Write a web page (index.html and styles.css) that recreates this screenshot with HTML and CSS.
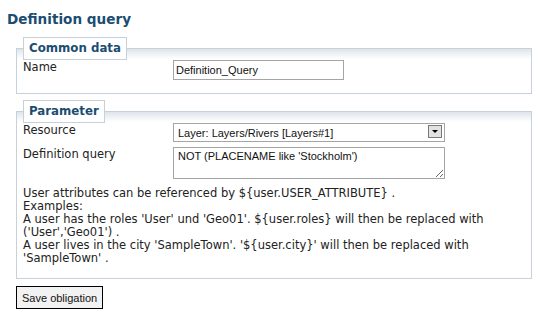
FILE: index.html
```html
<!DOCTYPE html>
<html lang="en">
<head>
    <meta charset="UTF-8">
    <title>Definition query</title>
    <link rel="stylesheet" href="styles.css">
</head>
<body>
    <h1>Definition query</h1>
    <form>
        <fieldset>
            <legend>Common data</legend>
            <div class="row">
                <label for="name">Name</label>
                <input type="text" id="name" value="Definition_Query">
            </div>
        </fieldset>

        <fieldset>
            <legend>Parameter</legend>
            <div class="row">
                <label for="resource">Resource</label>
                <div class="select-wrap">
                    <select id="resource">
                        <option>Layer: Layers/Rivers [Layers#1]</option>
                    </select>
                    <span class="arrow"></span>
                </div>
            </div>
            <div class="row">
                <label for="query">Definition query</label>
                <textarea id="query">NOT (PLACENAME like 'Stockholm')</textarea>
            </div>
            <p class="help">
                User attributes can be referenced by ${user.USER_ATTRIBUTE} .<br>
                Examples:<br>
                A user has the roles 'User' und 'Geo01'. ${user.roles} will then be replaced with ('User','Geo01') .<br>
                A user lives in the city 'SampleTown'. '${user.city}' will then be replaced with 'SampleTown' .
            </p>
        </fieldset>

        <button type="submit">Save obligation</button>
    </form>
</body>
</html>
```

FILE: styles.css
```css
body {
    font-family: "DejaVu Sans", Verdana, sans-serif;
    font-size: 11.5px;
    color: #222;
    margin: 0;
    padding: 0;
    background-color: #fff;
}
h1 {
    font-size: 13.6px;
    font-weight: bold;
    color: #1b4d72;
    margin: 0;
    padding: 11px 7px 0;
    line-height: 16px;
}
form {
    padding: 10px 10px 0 16px;
}
fieldset {
    border: 1px solid #c8d0da;
    margin: 0 0 4px 0;
    padding: 0 6px 10px 6px;
    background: linear-gradient(#dfe4eb, #fff 10px);
}
fieldset:first-child {
    padding-bottom: 8px;
    margin-bottom: 6px;
}
legend {
    font-size: 11.8px;
    font-weight: bold;
    color: #1b4d72;
    background-color: #fff;
    border: 1px solid #c8d0da;
    padding: 4px 5px 4px 5px;
    line-height: 13px;
}
.row {
    display: grid;
    grid-template-columns: 150px auto;
    margin-bottom: 5px;
    align-items: start;
}
.row label {
    padding-top: 1px;
    line-height: 13px;
}
input[type="text"] {
    width: 171px;
    height: 20px;
    box-sizing: border-box;
    border: 1px solid #a5a5a5;
    padding: 0 2px;
    font-family: "Liberation Sans", Arial, sans-serif;
    font-size: 11px;
    color: #111;
}
.select-wrap {
    position: relative;
    width: 272px;
    height: 19px;
}
select {
    appearance: none;
    width: 100%;
    height: 19px;
    box-sizing: border-box;
    border: 1px solid #a5a5a5;
    padding: 0 4px;
    font-family: "Liberation Sans", Arial, sans-serif;
    font-size: 11px;
    color: #111;
    background-color: #fff;
    border-radius: 0;
}
.arrow {
    position: absolute;
    right: 3px;
    top: 2px;
    width: 14px;
    height: 13px;
    box-sizing: border-box;
    border: 1px solid #7a7a7a;
    background-color: #e2e2e2;
    pointer-events: none;
}
.arrow::after {
    content: "";
    position: absolute;
    left: 3px;
    top: 4px;
    border-left: 3px solid transparent;
    border-right: 3px solid transparent;
    border-top: 3px solid #000;
}
textarea {
    width: 272px;
    height: 32px;
    box-sizing: border-box;
    border: 1px solid #a5a5a5;
    padding: 2px 4px;
    font-family: "Liberation Sans", Arial, sans-serif;
    font-size: 11px;
    color: #111;
    resize: both;
}
.help {
    margin: 8px 0 3px;
    line-height: 13px;
}
button {
    margin-top: 3px;
    font-family: "Liberation Sans", Arial, sans-serif;
    font-size: 11px;
    color: #111;
    background-color: #f2f2f2;
    border: 1px solid #000;
    padding: 0 5px;
    height: 23px;
    border-radius: 0;
}
```
